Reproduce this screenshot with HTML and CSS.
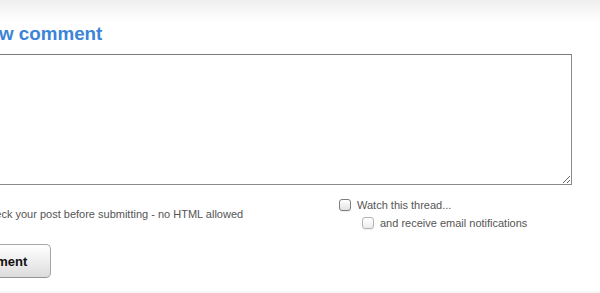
FILE: index.html
```html
<!DOCTYPE html>
<html>
<head>
<meta charset="utf-8">
<link rel="stylesheet" href="styles.css">
</head>
<body>
<div class="topfade"></div>
<form class="page">
  <h2 class="title">New comment</h2>
  <textarea class="comment-box"></textarea>
  <div class="meta-row">
    <p class="help">Please check your post before submitting - no HTML allowed</p>
    <div class="options">
      <label class="opt"><input type="checkbox" class="cb"><span>Watch this thread...</span></label>
      <label class="opt sub"><input type="checkbox" class="cb light"><span>and receive email notifications</span></label>
    </div>
  </div>
  <button type="button" class="submit">Post Comment</button>
  <div class="footer-edge"></div>
</form>
</body>
</html>
```
FILE: styles.css
```css
html, body {
  margin: 0;
  padding: 0;
  background: #fff;
  overflow: hidden;
}
body {
  width: 600px;
  height: 293px;
  font-family: "Liberation Sans", Arial, sans-serif;
  position: relative;
}
.topfade {
  height: 22px;
  background: linear-gradient(to bottom, #efefef 0%, #f6f6f6 45%, #ffffff 100%);
}
.page {
  margin: 0 0 0 -100px;
  width: 700px;
}
.title {
  margin: 1px 0 0 75px;
  font-size: 18.8px;
  line-height: 22px;
  font-weight: bold;
  color: #3b84d7;
}
.comment-box {
  display: block;
  margin: 9px 0 0 0;
  width: 672px;
  height: 131px;
  box-sizing: border-box;
  border: 1px solid #8a8a8a;
  border-top-color: #7a7a7a;
  padding: 4px;
  font-family: inherit;
  resize: both;
  background: #fff;
}
.meta-row {
  display: flex;
  align-items: flex-start;
}
.help {
  margin: 0;
  box-sizing: border-box;
  width: 439px;
  padding: 22px 0 0 47px;
  font-size: 11px;
  line-height: 14px;
  color: #555;
  white-space: nowrap;
}
.options {
  display: flex;
  flex-direction: column;
  gap: 6px;
  padding-top: 14px;
}
.opt {
  display: flex;
  align-items: center;
  gap: 6px;
  height: 12px;
  font-size: 11px;
  line-height: 12px;
  color: #555;
  white-space: nowrap;
}
.opt.sub {
  margin-left: 23px;
}
.cb {
  appearance: none;
  -webkit-appearance: none;
  margin: 0;
  width: 12px;
  height: 12px;
  box-sizing: border-box;
  border: 1px solid #7d7d7d;
  border-radius: 3px;
  background: linear-gradient(to bottom, #ffffff 0%, #f1f1f1 50%, #e2e2e2 100%);
  box-shadow: 0 1px 0 rgba(0,0,0,0.06);
}
.cb.light {
  border-color: #b4b4b4;
  background: linear-gradient(to bottom, #ffffff 0%, #f6f6f6 50%, #ececec 100%);
}
.submit {
  display: block;
  margin: 15px 0 0 7px;
  width: 144px;
  height: 34px;
  box-sizing: border-box;
  border: 1px solid #a6a6a6;
  border-bottom-color: #939393;
  border-radius: 5px;
  background: linear-gradient(to bottom, #ffffff 0%, #f2f2f2 40%, #dcdcdc 100%);
  font-family: inherit;
  font-size: 13px;
  font-weight: bold;
  color: #111;
  padding: 0 0 0 5px;
  text-align: center;
}
.footer-edge {
  margin-top: 13px;
  height: 3px;
  background: #f7f7f7;
}
```
